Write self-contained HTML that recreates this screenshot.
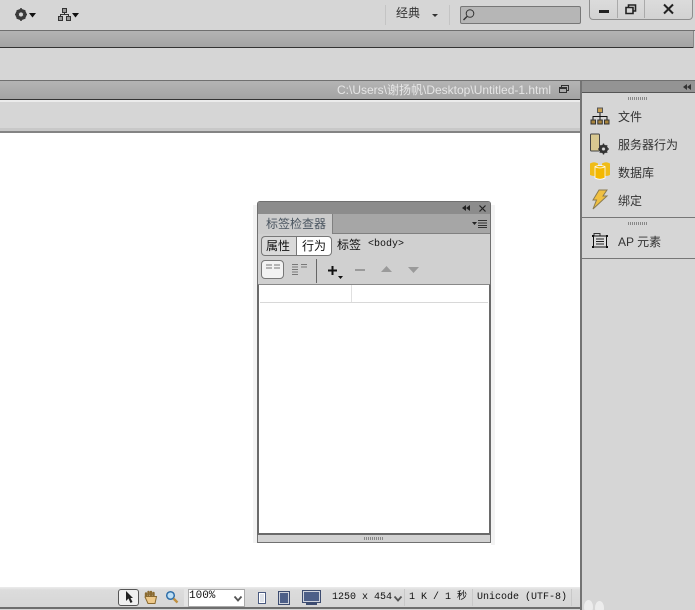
<!DOCTYPE html>
<html><head><meta charset="utf-8">
<style>
html,body{margin:0;padding:0;background:#d6d6d6;width:695px;height:610px;overflow:hidden;}
#w{width:695px;height:610px;position:relative;overflow:hidden;font-family:"Liberation Sans","Noto Sans CJK SC",sans-serif;font-size:12px;color:#222;}
.a{position:absolute;}
.t{position:absolute;white-space:nowrap;line-height:14px;}
.m{position:absolute;white-space:nowrap;font-family:"Liberation Mono","WenQuanYi Zen Hei",monospace;font-size:10px;line-height:12px;color:#111;}
.bar{background:linear-gradient(#b4b4b4,#a4a4a4);}
svg{position:absolute;display:block;overflow:visible;}
</style></head><body><div id="w">

<!-- top toolbar -->
<svg style="left:14px;top:7px" width="24" height="15" viewBox="0 0 24 15">
<circle cx="7" cy="7.500" r="4" fill="none" stroke="#3a3a3a" stroke-width="3"/>
<path d="M7 1v13M1 7.500h12M2.800 3.300l8.400 8.400M11.200 3.300l-8.400 8.400" stroke="#3a3a3a" stroke-width="1.600"/>
<circle cx="7" cy="7.500" r="2" fill="#d6d6d6"/>
<path d="M15 6h7l-3.500 4.500z" fill="#111"/></svg>
<svg style="left:58px;top:8px" width="22" height="14" viewBox="0 0 22 14">
<rect x="4.500" y="0.500" width="4" height="4" fill="#999" stroke="#333"/><rect x="0.500" y="8.500" width="4" height="4" fill="#999" stroke="#333"/><rect x="8.500" y="8.500" width="4" height="4" fill="#999" stroke="#333"/>
<path d="M6.500 5v2M2.500 8V6.500h8V8" fill="none" stroke="#333"/><path d="M14 5h7l-3.500 4.500z" fill="#111"/></svg>
<div class="a" style="left:385px;top:5px;width:1px;height:20px;background:#c4c4c4"></div>
<div class="t" style="left:396px;top:6px;color:#333">经典</div>
<div class="a" style="left:432px;top:14px;width:0;height:0;border-left:3px solid transparent;border-right:3px solid transparent;border-top:3px solid #333"></div>
<div class="a" style="left:449px;top:5px;width:1px;height:20px;background:#c4c4c4"></div>
<div class="a" style="left:460px;top:6px;width:119px;height:16px;background:#b6b6b6;border:1px solid #777;border-radius:2px"></div>
<svg style="left:462px;top:8px" width="14" height="14" viewBox="0 0 14 14"><circle cx="8" cy="5.500" r="3.800" fill="none" stroke="#333"/><path d="M5 8.500L1.500 12" stroke="#333" stroke-width="1.400"/></svg>

<!-- window buttons -->
<div class="a" style="left:589px;top:-2px;width:102px;height:20px;background:linear-gradient(#dcdcdc,#d2d2d2);border:1px solid #8e8e8e;border-radius:0 0 4px 4px"></div>
<div class="a" style="left:617px;top:0;width:1px;height:18px;background:#aaa"></div>
<div class="a" style="left:644px;top:0;width:1px;height:18px;background:#aaa"></div>
<div class="a" style="left:599px;top:10px;width:10px;height:3px;background:#222"></div>
<svg style="left:625px;top:4px" width="12" height="11" viewBox="0 0 12 11"><path d="M3.500 3V1h7v6H8M1 3.500h7v6H1z" fill="none" stroke="#222" stroke-width="1.600"/></svg>
<svg style="left:663px;top:4px" width="11" height="10" viewBox="0 0 11 10"><path d="M1 .5l9 9M10 .5l-9 9" stroke="#222" stroke-width="2"/></svg>

<!-- bar 1 -->
<div class="a" style="left:0;top:30px;width:695px;height:1px;background:#6f6f6f"></div>
<div class="a bar" style="left:0;top:31px;width:693px;height:16px"></div>
<div class="a" style="left:0;top:47px;width:693px;height:1px;background:#333"></div>
<div class="a" style="left:693px;top:31px;width:1px;height:17px;background:#888"></div>

<!-- doc title -->
<div class="a" style="left:0;top:80px;width:695px;height:1px;background:#707070"></div>
<div class="a bar" style="left:0;top:81px;width:580px;height:18px"></div>
<div class="a" style="left:0;top:99px;width:580px;height:1px;background:#333"></div>
<div class="a" style="left:0;top:100px;width:580px;height:2px;background:#ececec"></div>
<div class="t" style="left:337px;top:83px;color:#e6e6e6;font-size:12px">C:\Users\谢扬帆\Desktop\Untitled-1.html</div>
<svg style="left:559px;top:85px" width="10" height="9" viewBox="0 0 10 9"><path d="M2.500 2V.5h7v5H8M.5 2.500h7v5h-7zM.5 3.500h7" fill="none" stroke="#333"/></svg>
<div class="a" style="left:0;top:128px;width:580px;height:3px;background:#c8c8c8"></div>
<div class="a" style="left:0;top:131px;width:580px;height:2px;background:#848484"></div>

<!-- design area -->
<div class="a" style="left:0;top:133px;width:580px;height:454px;background:#fff"></div>

<!-- right panel -->
<div class="a" style="left:580px;top:81px;width:2px;height:529px;background:#747474"></div>
<div class="a" style="left:582px;top:81px;width:113px;height:11px;background:#949494"></div>
<div class="a" style="left:582px;top:92px;width:113px;height:1px;background:#555"></div>
<svg style="left:683px;top:84px" width="8" height="6" viewBox="0 0 8 6"><path d="M4 0v6L0 3zM8 0v6L4 3z" fill="#333"/></svg>
<div class="a" style="left:628px;top:97px;width:20px;height:3px;background:repeating-linear-gradient(90deg,#888 0 1px,transparent 1px 2px)"></div>

<svg style="left:590px;top:107px" width="20" height="18" viewBox="0 0 20 18"><path d="M10 5v4M3 13V9.500h14V13M10 9v4" fill="none" stroke="#111"/><rect x="7.500" y="1" width="5" height="4.500" fill="#c9a050" stroke="#555"/><rect x="1" y="13" width="4.500" height="4" fill="#a8843c" stroke="#333"/><rect x="7.800" y="13" width="4.500" height="4" fill="#a8843c" stroke="#333"/><rect x="14.500" y="13" width="4.500" height="4" fill="#a8843c" stroke="#333"/></svg>
<div class="t" style="left:618px;top:110px;color:#333">文件</div>

<svg style="left:589px;top:133px" width="22" height="22" viewBox="0 0 22 22"><rect x="1.500" y="1" width="9" height="17" rx="1" fill="#d8c890" stroke="#444"/><circle cx="14.500" cy="16" r="3.200" fill="none" stroke="#333" stroke-width="2.600"/><path d="M14.500 10.500v11M9 16h11M10.800 12.300l7.400 7.400M18.200 12.300l-7.400 7.400" stroke="#333" stroke-width="1.300"/><circle cx="14.500" cy="16" r="1.500" fill="#d6d6d6"/></svg>
<div class="t" style="left:618px;top:138px;color:#333">服务器行为</div>

<svg style="left:589px;top:161px" width="22" height="20" viewBox="0 0 22 20"><path d="M1 2.500q4-2.500 8 0V14q-4 2-8 0z" fill="#f0bc18"/><path d="M13 2.500q4-2.500 8 0V14q-4 2-8 0z" fill="#f0bc18"/><path d="M6 5.500q5-2 10 0V17q-5 2.500-10 0z" fill="#f4b800" stroke="#fff" stroke-width=".8"/><path d="M6.500 6q4.500 2 9 0" fill="none" stroke="#fff" stroke-width=".8"/></svg>
<div class="t" style="left:618px;top:166px;color:#333">数据库</div>

<svg style="left:591px;top:189px" width="18" height="21" viewBox="0 0 18 21"><path d="M8 1h8l-4 6h4L2 20l3.500-9H2z" fill="#f0c040" stroke="#8a7a50" stroke-width="1"/></svg>
<div class="t" style="left:618px;top:194px;color:#333">绑定</div>

<div class="a" style="left:582px;top:217px;width:113px;height:1px;background:#777"></div>
<div class="a" style="left:628px;top:222px;width:20px;height:3px;background:repeating-linear-gradient(90deg,#888 0 1px,transparent 1px 2px)"></div>
<svg style="left:591px;top:232px" width="18" height="17" viewBox="0 0 18 17"><path d="M3 4V1.500h6V4" fill="none" stroke="#333"/><rect x="2.500" y="4" width="13" height="11" fill="#ddd" stroke="#111"/><path d="M5 7h8M5 9.500h8M5 12h8" stroke="#222"/><rect x="1" y="3" width="2" height="2" fill="#111"/><rect x="15" y="3" width="2" height="2" fill="#111"/><rect x="1" y="14" width="2" height="2" fill="#111"/><rect x="15" y="14" width="2" height="2" fill="#111"/></svg>
<div class="t" style="left:618px;top:235px;color:#333">AP 元素</div>
<div class="a" style="left:582px;top:258px;width:113px;height:1px;background:#777"></div>

<!-- floating panel -->
<div class="a" style="left:253px;top:205px;width:4px;height:338px;background:#f3f3f3"></div>
<div class="a" style="left:491px;top:205px;width:4px;height:340px;background:#f3f3f3"></div>
<div class="a" style="left:257px;top:201px;width:234px;height:342px;background:#d0d0d0;border-radius:3px 3px 0 0;box-shadow:inset 0 0 0 1px #707070"></div>
<div class="a" style="left:258px;top:202px;width:232px;height:12px;background:#8c8c8c;border-radius:2px 2px 0 0"></div>
<svg style="left:462px;top:205px" width="8" height="6" viewBox="0 0 8 6"><path d="M4 0v6L0 3zM8 0v6L4 3z" fill="#222"/></svg>
<svg style="left:479px;top:205px" width="7" height="7" viewBox="0 0 7 7"><path d="M.5.500l6 6M6.500.500l-6 6" stroke="#222" stroke-width="1.200"/></svg>
<div class="a" style="left:258px;top:214px;width:232px;height:19px;background:#a6a6a6"></div>
<div class="a" style="left:258px;top:233px;width:232px;height:1px;background:#808080"></div>
<div class="a" style="left:258px;top:214px;width:75px;height:20px;background:#cccccc;border-right:1px solid #808080;box-sizing:border-box"></div>
<div class="t" style="left:266px;top:217px;color:#4a5560">标签检查器</div>
<svg style="left:472px;top:220px" width="15" height="8" viewBox="0 0 15 8"><path d="M0 2h5L2.500 5z" fill="#222"/><path d="M6 .5h9M6 3h9M6 5.500h9M6 7.500h9" stroke="#333"/></svg>

<div class="a" style="left:261px;top:236px;width:35px;height:20px;box-sizing:border-box;border:1px solid #777;border-right:0;border-radius:4px 0 0 4px;background:#dadada"></div>
<div class="a" style="left:296px;top:236px;width:36px;height:20px;box-sizing:border-box;border:1px solid #777;border-radius:0 4px 4px 0;background:#fff"></div>
<div class="t" style="left:266px;top:239px;color:#111">属性</div>
<div class="t" style="left:302px;top:239px;color:#111">行为</div>
<div class="t" style="left:337px;top:238px;color:#111">标签</div>
<div class="m" style="left:368px;top:239px">&lt;body&gt;</div>

<div class="a" style="left:261px;top:260px;width:23px;height:19px;box-sizing:border-box;border:1px solid #777;border-radius:4px;background:#f2f2f2"></div>
<svg style="left:265px;top:264px" width="16" height="7" viewBox="0 0 16 7"><path d="M1 1h6M1 4h6M9 1h6M9 4h6" stroke="#777"/></svg>
<svg style="left:292px;top:264px" width="16" height="12" viewBox="0 0 16 12"><path d="M0 .5h6M0 3h6M0 5.500h6M0 8h6M0 10.500h6M9 .5h6M9 3h6" stroke="#777"/></svg>
<div class="a" style="left:316px;top:259px;width:1px;height:24px;background:#666"></div>
<svg style="left:328px;top:266px" width="16" height="14" viewBox="0 0 16 14"><path d="M4.500 0v9M0 4.500h9" stroke="#111" stroke-width="2"/><path d="M10 10h5l-2.500 3z" fill="#111"/></svg>
<div class="a" style="left:355px;top:269px;width:10px;height:2px;background:#9a9a9a"></div>
<svg style="left:381px;top:266px" width="11" height="6" viewBox="0 0 11 6"><path d="M5.500 0L11 6H0z" fill="#9a9a9a"/></svg>
<svg style="left:408px;top:267px" width="11" height="6" viewBox="0 0 11 6"><path d="M0 0h11L5.500 6z" fill="#9a9a9a"/></svg>

<div class="a" style="left:257px;top:284px;width:234px;height:251px;box-sizing:border-box;background:#fff;border:1px solid #6a6a6a;border-left-width:2px;border-right-width:2px;border-bottom-width:2px;border-top-color:#888"></div>
<div class="a" style="left:260px;top:302px;width:228px;height:1px;background:#d8d8d8"></div>
<div class="a" style="left:351px;top:285px;width:1px;height:17px;background:#e0e0e0"></div>
<div class="a" style="left:258px;top:535px;width:232px;height:7px;background:#d2d2d2"></div>
<div class="a" style="left:257px;top:542px;width:234px;height:1px;background:#707070"></div>
<div class="a" style="left:364px;top:537px;width:20px;height:3px;background:repeating-linear-gradient(90deg,#888 0 1px,transparent 1px 2px)"></div>

<!-- status bar -->
<div class="a" style="left:0;top:587px;width:580px;height:20px;background:linear-gradient(#ececec,#dcdcdc 3px,#d6d6d6)"></div>
<div class="a" style="left:0;top:607px;width:580px;height:2px;background:#6e6e6e"></div>
<div class="a" style="left:118px;top:589px;width:21px;height:17px;box-sizing:border-box;border:1px solid #555;border-radius:3px;background:#f0f0f0"></div>
<svg style="left:125px;top:591px" width="9" height="13" viewBox="0 0 9 13"><path d="M1 0v10l2.500-2.500L5.500 12l2-1-2-4H8z" fill="#222"/></svg>
<svg style="left:143px;top:590px" width="15" height="15" viewBox="0 0 15 15"><path d="M3 6V3.500M5.500 5V2M8 5V2M10.500 5.500V3" stroke="#8a6a30" stroke-width="2.400" stroke-linecap="round"/><path d="M2 7l3 6.500h7l1.500-7H3z" fill="#eec98a" stroke="#8a6a30"/></svg>
<svg style="left:165px;top:590px" width="14" height="14" viewBox="0 0 14 14"><circle cx="5.500" cy="5.500" r="3.800" fill="#bfe0f5" stroke="#2f6ea8" stroke-width="1.500"/><path d="M8.500 8.500l4 4" stroke="#c09040" stroke-width="2.400"/></svg>
<div class="a" style="left:184px;top:589px;width:4px;height:17px;background:#e4e4e4"></div>
<div class="a" style="left:188px;top:589px;width:57px;height:18px;box-sizing:border-box;background:#fff;border:1px solid #aaa"></div>
<div class="m" style="left:189px;top:590px;font-size:11px">100%</div>
<svg style="left:234px;top:596px" width="8" height="6" viewBox="0 0 8 6"><path d="M.5.500L4 4.500 7.500.500" fill="none" stroke="#555" stroke-width="1.800"/></svg>
<div class="a" style="left:258px;top:592px;width:8px;height:12px;box-sizing:border-box;border:1px solid #4a5a80;background:#dfe3ea;box-shadow:inset 0 0 0 1px #fff"></div>
<div class="a" style="left:278px;top:591px;width:12px;height:14px;box-sizing:border-box;border:1px solid #3d4c70;background:#4d5f88;box-shadow:inset 0 0 0 1px #cfd3dc"></div>
<div class="a" style="left:302px;top:590px;width:19px;height:13px;box-sizing:border-box;border:1px solid #3d4c70;background:#4d5f88;box-shadow:inset 0 0 0 1px #cfd3dc"></div>
<div class="a" style="left:306px;top:603px;width:11px;height:2px;background:#3d4c70"></div>
<div class="m" style="left:332px;top:592px;font-size:10px">1250 x 454</div>
<svg style="left:394px;top:596px" width="8" height="6" viewBox="0 0 8 6"><path d="M.5.500L4 4.500 7.500.500" fill="none" stroke="#555" stroke-width="1.800"/></svg>
<div class="a" style="left:404px;top:589px;width:1px;height:17px;background:#c8c8c8"></div>
<div class="m" style="left:409px;top:592px;font-size:10px">1 K / 1 秒</div>
<div class="a" style="left:472px;top:589px;width:1px;height:17px;background:#c8c8c8"></div>
<div class="m" style="left:477px;top:592px;font-size:10px">Unicode (UTF-8)</div>
<div class="a" style="left:571px;top:589px;width:1px;height:17px;background:#c8c8c8"></div>

<!-- ovals -->
<div class="a" style="left:584px;top:600px;width:9px;height:14px;border-radius:50%;background:#ececec"></div>
<div class="a" style="left:595px;top:601px;width:9px;height:14px;border-radius:50%;background:#ececec"></div>

</div></body></html>
